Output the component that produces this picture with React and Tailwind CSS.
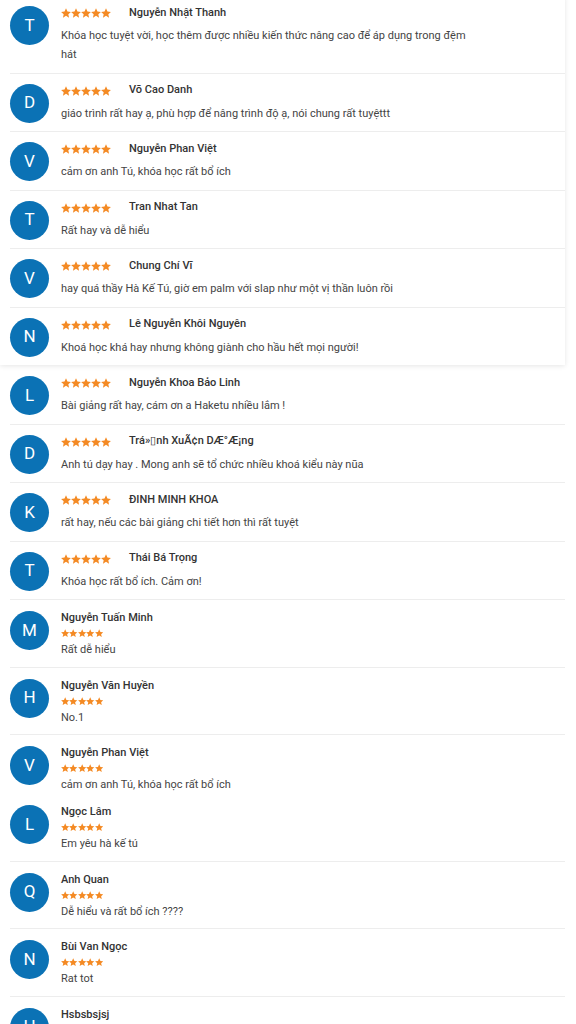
import React from 'react'

const topReviews = [
    { letter: 'T', name: 'Nguyễn Nhật Thanh', text: 'Khóa học tuyệt vời, học thêm được nhiều kiến thức nâng cao để áp dụng trong đệm hát' },
    { letter: 'D', name: 'Võ Cao Danh', text: 'giáo trình rất hay ạ, phù hợp để nâng trình độ ạ, nói chung rất tuyệttt' },
    { letter: 'V', name: 'Nguyễn Phan Việt', text: 'cảm ơn anh Tú, khóa học rất bổ ích' },
    { letter: 'T', name: 'Tran Nhat Tan', text: 'Rất hay và dễ hiểu' },
    { letter: 'V', name: 'Chung Chí Vĩ', text: 'hay quá thầy Hà Kế Tú, giờ em palm với slap như một vị thần luôn rồi' },
    { letter: 'N', name: 'Lê Nguyễn Khôi Nguyên', text: 'Khoá học khá hay nhưng không giành cho hầu hết mọi người!' },
]

const midReviews = [
    { letter: 'L', name: 'Nguyễn Khoa Bảo Linh', text: 'Bài giảng rất hay, cám ơn a Haketu nhiều lắm !' },
    { letter: 'D', name: 'Trá»\u25AFnh XuÃ¢n DÆ°Æ¡ng', text: 'Anh tú dạy hay . Mong anh sẽ tổ chức nhiều khoá kiểu này nũa' },
    { letter: 'K', name: 'ĐINH MINH KHOA', text: 'rất hay, nếu các bài giảng chi tiết hơn thì rất tuyệt' },
    { letter: 'T', name: 'Thái Bá Trọng', text: 'Khóa học rất bổ ích. Cảm ơn!' },
]

const bottomReviews = [
    { letter: 'M', name: 'Nguyễn Tuấn Minh', text: 'Rất dễ hiểu' },
    { letter: 'H', name: 'Nguyễn Văn Huyền', text: 'No.1' },
    { letter: 'V', name: 'Nguyễn Phan Việt', text: 'cảm ơn anh Tú, khóa học rất bổ ích', compact: true },
    { letter: 'L', name: 'Ngọc Lâm', text: 'Em yêu hà kế tú' },
    { letter: 'Q', name: 'Anh Quan', text: 'Dễ hiểu và rất bổ ích ????' },
    { letter: 'N', name: 'Bùi Van Ngọc', text: 'Rat tot' },
    { letter: 'H', name: 'Hsbsbsjsj', text: 'Hay' },
]

function Stars({ size }) {
    return (
        <div className="flex items-center">
            {[0, 1, 2, 3, 4].map((i) => (
                <svg key={i} width={size} height={size} viewBox="1 1.2 22 21" className="shrink-0">
                    <path
                        fill="#f48a24"
                        d="M12 1.5l3.2 7 7.6.8-5.7 5.1 1.6 7.5L12 18l-6.7 3.9 1.6-7.5L1.2 9.3l7.6-.8z"
                    />
                </svg>
            ))}
        </div>
    )
}

function Avatar({ letter, className }) {
    return (
        <div className={`w-[39px] h-[39px] shrink-0 rounded-full bg-[#0b72b5] flex items-center justify-center text-white text-[17px] ${className}`}>
            {letter}
        </div>
    )
}

function InlineReview({ review, last }) {
    return (
        <div className={`flex items-start pt-[8px] pb-[8.5px] ${last ? '' : 'border-b border-[#ededed]'}`}>
            <Avatar letter={review.letter} className="mt-[2px]" />
            <div className="ml-[12px] w-[405px]">
                <div className="h-[18px] flex items-center">
                    <Stars size={10} />
                    <span className="ml-[18px] text-[11px] font-medium text-[#333]">{review.name}</span>
                </div>
                <p className="mt-[4px] text-[11px] leading-[19px] text-[#444]">{review.text}</p>
            </div>
        </div>
    )
}

function StackedReview({ review }) {
    return (
        <div className={`flex items-start pt-[9px] ${review.compact ? '' : 'pb-[7.5px] border-b border-[#ededed]'}`}>
            <Avatar letter={review.letter} className="mt-[2px]" />
            <div className="ml-[12px]">
                <p className="text-[11px] leading-[18px] font-medium text-[#333]">{review.name}</p>
                <div className="h-[13px] flex items-center">
                    <Stars size={8.4} />
                </div>
                <p className="text-[11px] leading-[19px] text-[#444]">{review.text}</p>
            </div>
        </div>
    )
}

export default function App() {
    return (
        <div className="min-h-screen bg-white overflow-hidden" style={{ fontFamily: 'Roboto, "Noto Sans", sans-serif' }}>
            <div className="w-[565px] -mt-[4px] pl-[10px] bg-white shadow-[0_1px_5px_rgba(0,0,0,0.1)]">
                {topReviews.map((r, i) => (
                    <InlineReview key={i} review={r} last={i === topReviews.length - 1} />
                ))}
            </div>
            <div className="w-[565px] mt-[1px] pl-[10px]">
                {midReviews.map((r, i) => (
                    <InlineReview key={i} review={r} />
                ))}
                {bottomReviews.map((r, i) => (
                    <StackedReview key={i} review={r} />
                ))}
            </div>
        </div>
    )
}
